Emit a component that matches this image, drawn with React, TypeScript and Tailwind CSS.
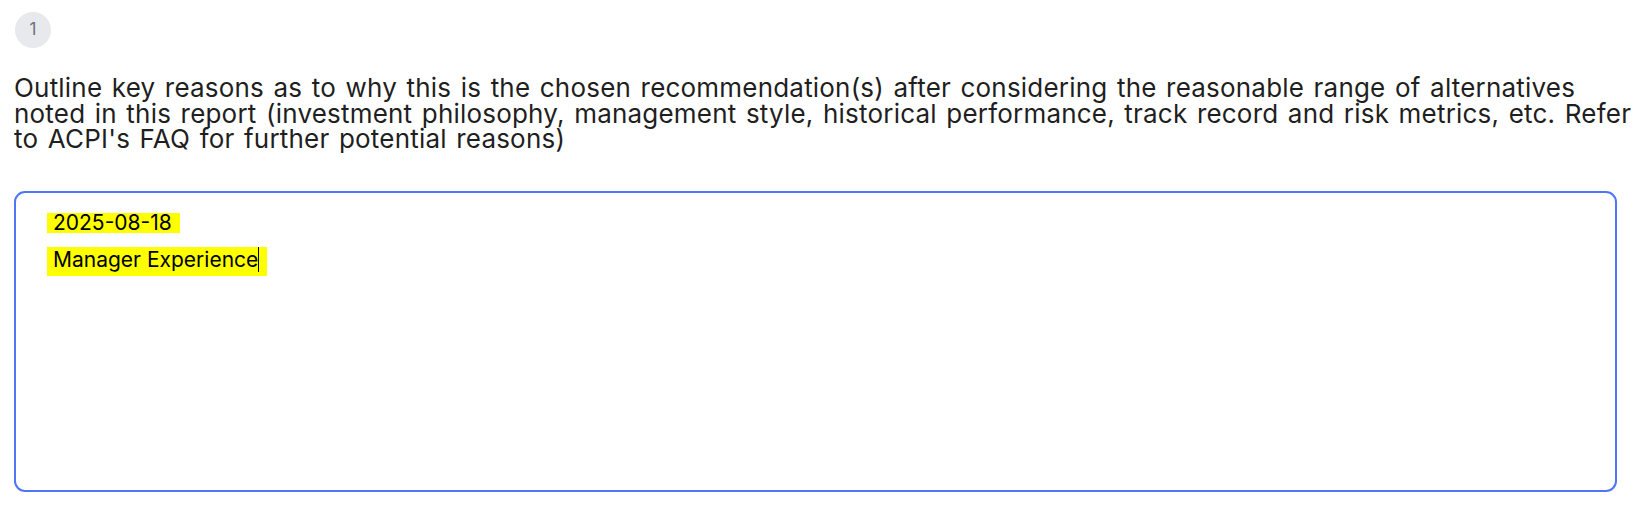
import React from "react";

function Highlight({ children, line }: { children: React.ReactNode; line: 1 | 2 }) {
  return (
    <span
      className={
        line === 1
          ? "block bg-[#ffff00] pl-[6px] pr-[8px] h-[20px] leading-[20px]"
          : "block bg-[#ffff00] pl-[6px] pr-[8px] h-[29px] leading-[26px] pb-[3px]"
      }
    >
      {children}
    </span>
  );
}

export default function App() {
  return (
    <div className="w-[1641px] h-[511px] bg-white font-['Inter',sans-serif] text-[#1f1f1f] pl-[14px] pt-[12px]">
      <div className="ml-px w-9 h-9 rounded-full bg-[#e8e9ec] flex items-center justify-center text-[17px] text-[#6b7280]">
        1
      </div>

      <p className="mt-[27px] text-[26px] leading-[25.5px] tracking-[0.2px] [word-spacing:2px]">
        Outline key reasons as to why this is the chosen recommendation(s)
        after considering the reasonable range of alternatives noted in this
        report (investment philosophy, management style, historical
        performance, track record and risk metrics, etc. Refer to ACPI's FAQ
        for further potential reasons)
      </p>

      <div className="mt-[39px] w-[1603px] h-[301px] border-2 border-[#4f76f6] rounded-[11px] pl-[31px] pt-[20px] text-[21px] text-black flex flex-col items-start">
        <Highlight line={1}>2025-08-18</Highlight>
        <div className="mt-[14px]">
          <Highlight line={2}>
            Manager Experience
            <span className="inline-block align-[-5px] w-px h-[25px] bg-black" />
          </Highlight>
        </div>
      </div>
    </div>
  );
}
